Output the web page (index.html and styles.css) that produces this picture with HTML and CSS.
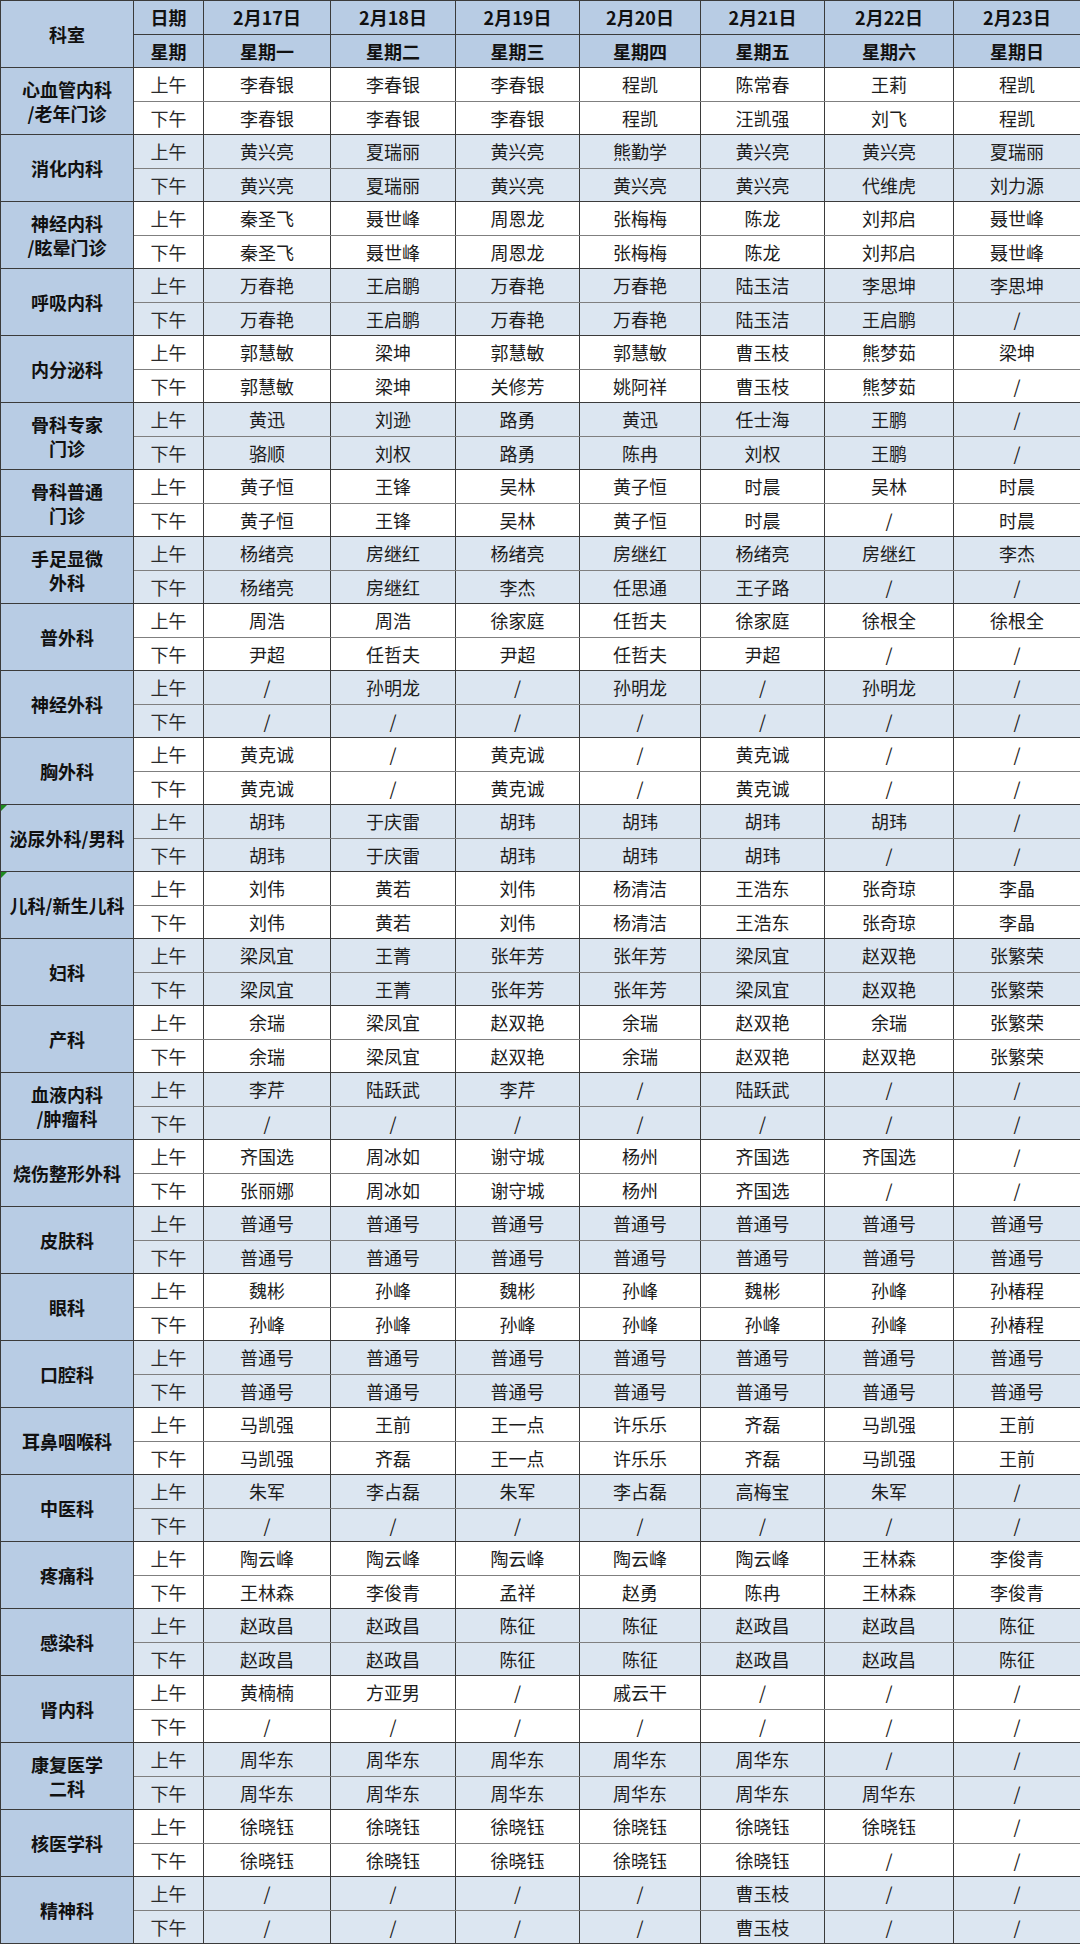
FILE: index.html
```html
<!DOCTYPE html>
<html lang="zh-CN">
<head>
<meta charset="utf-8">
<title>门诊排班表</title>
<link rel="stylesheet" href="styles.css">
</head>
<body>
<table class="sched">
<colgroup>
<col class="c-dept"><col class="c-slot"><col class="c-d1"><col class="c-d2"><col class="c-d3"><col class="c-d4"><col class="c-d5"><col class="c-d6"><col class="c-d7">
</colgroup>
<thead>
<tr><th class="dept" rowspan="2">科室</th><th>日期</th><th>2月17日</th><th>2月18日</th><th>2月19日</th><th>2月20日</th><th>2月21日</th><th>2月22日</th><th>2月23日</th></tr>
<tr><th>星期</th><th>星期一</th><th>星期二</th><th>星期三</th><th>星期四</th><th>星期五</th><th>星期六</th><th>星期日</th></tr>
</thead>
<tbody class="w">
<tr class="am"><th class="dept" rowspan="2">心血管内科<br>/老年门诊</th><td class="slot">上午</td><td>李春银</td><td>李春银</td><td>李春银</td><td>程凯</td><td>陈常春</td><td>王莉</td><td>程凯</td></tr>
<tr class="pm"><td class="slot">下午</td><td>李春银</td><td>李春银</td><td>李春银</td><td>程凯</td><td>汪凯强</td><td>刘飞</td><td>程凯</td></tr>
</tbody>
<tbody class="b">
<tr class="am"><th class="dept" rowspan="2">消化内科</th><td class="slot">上午</td><td>黄兴亮</td><td>夏瑞丽</td><td>黄兴亮</td><td>熊勤学</td><td>黄兴亮</td><td>黄兴亮</td><td>夏瑞丽</td></tr>
<tr class="pm"><td class="slot">下午</td><td>黄兴亮</td><td>夏瑞丽</td><td>黄兴亮</td><td>黄兴亮</td><td>黄兴亮</td><td>代维虎</td><td>刘力源</td></tr>
</tbody>
<tbody class="w">
<tr class="am"><th class="dept" rowspan="2">神经内科<br>/眩晕门诊</th><td class="slot">上午</td><td>秦圣飞</td><td>聂世峰</td><td>周恩龙</td><td>张梅梅</td><td>陈龙</td><td>刘邦启</td><td>聂世峰</td></tr>
<tr class="pm"><td class="slot">下午</td><td>秦圣飞</td><td>聂世峰</td><td>周恩龙</td><td>张梅梅</td><td>陈龙</td><td>刘邦启</td><td>聂世峰</td></tr>
</tbody>
<tbody class="b">
<tr class="am"><th class="dept" rowspan="2">呼吸内科</th><td class="slot">上午</td><td>万春艳</td><td>王启鹏</td><td>万春艳</td><td>万春艳</td><td>陆玉洁</td><td>李思坤</td><td>李思坤</td></tr>
<tr class="pm"><td class="slot">下午</td><td>万春艳</td><td>王启鹏</td><td>万春艳</td><td>万春艳</td><td>陆玉洁</td><td>王启鹏</td><td>/</td></tr>
</tbody>
<tbody class="w">
<tr class="am"><th class="dept" rowspan="2">内分泌科</th><td class="slot">上午</td><td>郭慧敏</td><td>梁坤</td><td>郭慧敏</td><td>郭慧敏</td><td>曹玉枝</td><td>熊梦茹</td><td>梁坤</td></tr>
<tr class="pm"><td class="slot">下午</td><td>郭慧敏</td><td>梁坤</td><td>关修芳</td><td>姚阿祥</td><td>曹玉枝</td><td>熊梦茹</td><td>/</td></tr>
</tbody>
<tbody class="b">
<tr class="am"><th class="dept" rowspan="2">骨科专家<br>门诊</th><td class="slot">上午</td><td>黄迅</td><td>刘逊</td><td>路勇</td><td>黄迅</td><td>任士海</td><td>王鹏</td><td>/</td></tr>
<tr class="pm"><td class="slot">下午</td><td>骆顺</td><td>刘权</td><td>路勇</td><td>陈冉</td><td>刘权</td><td>王鹏</td><td>/</td></tr>
</tbody>
<tbody class="w">
<tr class="am"><th class="dept" rowspan="2">骨科普通<br>门诊</th><td class="slot">上午</td><td>黄子恒</td><td>王锋</td><td>吴林</td><td>黄子恒</td><td>时晨</td><td>吴林</td><td>时晨</td></tr>
<tr class="pm"><td class="slot">下午</td><td>黄子恒</td><td>王锋</td><td>吴林</td><td>黄子恒</td><td>时晨</td><td>/</td><td>时晨</td></tr>
</tbody>
<tbody class="b">
<tr class="am"><th class="dept" rowspan="2">手足显微<br>外科</th><td class="slot">上午</td><td>杨绪亮</td><td>房继红</td><td>杨绪亮</td><td>房继红</td><td>杨绪亮</td><td>房继红</td><td>李杰</td></tr>
<tr class="pm"><td class="slot">下午</td><td>杨绪亮</td><td>房继红</td><td>李杰</td><td>任思通</td><td>王子路</td><td>/</td><td>/</td></tr>
</tbody>
<tbody class="w">
<tr class="am"><th class="dept" rowspan="2">普外科</th><td class="slot">上午</td><td>周浩</td><td>周浩</td><td>徐家庭</td><td>任哲夫</td><td>徐家庭</td><td>徐根全</td><td>徐根全</td></tr>
<tr class="pm"><td class="slot">下午</td><td>尹超</td><td>任哲夫</td><td>尹超</td><td>任哲夫</td><td>尹超</td><td>/</td><td>/</td></tr>
</tbody>
<tbody class="b">
<tr class="am"><th class="dept" rowspan="2">神经外科</th><td class="slot">上午</td><td>/</td><td>孙明龙</td><td>/</td><td>孙明龙</td><td>/</td><td>孙明龙</td><td>/</td></tr>
<tr class="pm"><td class="slot">下午</td><td>/</td><td>/</td><td>/</td><td>/</td><td>/</td><td>/</td><td>/</td></tr>
</tbody>
<tbody class="w">
<tr class="am"><th class="dept" rowspan="2">胸外科</th><td class="slot">上午</td><td>黄克诚</td><td>/</td><td>黄克诚</td><td>/</td><td>黄克诚</td><td>/</td><td>/</td></tr>
<tr class="pm"><td class="slot">下午</td><td>黄克诚</td><td>/</td><td>黄克诚</td><td>/</td><td>黄克诚</td><td>/</td><td>/</td></tr>
</tbody>
<tbody class="b">
<tr class="am"><th class="dept mark" rowspan="2">泌尿外科/男科</th><td class="slot">上午</td><td>胡玮</td><td>于庆雷</td><td>胡玮</td><td>胡玮</td><td>胡玮</td><td>胡玮</td><td>/</td></tr>
<tr class="pm"><td class="slot">下午</td><td>胡玮</td><td>于庆雷</td><td>胡玮</td><td>胡玮</td><td>胡玮</td><td>/</td><td>/</td></tr>
</tbody>
<tbody class="w">
<tr class="am"><th class="dept mark" rowspan="2">儿科/新生儿科</th><td class="slot">上午</td><td>刘伟</td><td>黄若</td><td>刘伟</td><td>杨清洁</td><td>王浩东</td><td>张奇琼</td><td>李晶</td></tr>
<tr class="pm"><td class="slot">下午</td><td>刘伟</td><td>黄若</td><td>刘伟</td><td>杨清洁</td><td>王浩东</td><td>张奇琼</td><td>李晶</td></tr>
</tbody>
<tbody class="b">
<tr class="am"><th class="dept" rowspan="2">妇科</th><td class="slot">上午</td><td>梁凤宜</td><td>王菁</td><td>张年芳</td><td>张年芳</td><td>梁凤宜</td><td>赵双艳</td><td>张繁荣</td></tr>
<tr class="pm"><td class="slot">下午</td><td>梁凤宜</td><td>王菁</td><td>张年芳</td><td>张年芳</td><td>梁凤宜</td><td>赵双艳</td><td>张繁荣</td></tr>
</tbody>
<tbody class="w">
<tr class="am"><th class="dept" rowspan="2">产科</th><td class="slot">上午</td><td>余瑞</td><td>梁凤宜</td><td>赵双艳</td><td>余瑞</td><td>赵双艳</td><td>余瑞</td><td>张繁荣</td></tr>
<tr class="pm"><td class="slot">下午</td><td>余瑞</td><td>梁凤宜</td><td>赵双艳</td><td>余瑞</td><td>赵双艳</td><td>赵双艳</td><td>张繁荣</td></tr>
</tbody>
<tbody class="b">
<tr class="am"><th class="dept" rowspan="2">血液内科<br>/肿瘤科</th><td class="slot">上午</td><td>李芹</td><td>陆跃武</td><td>李芹</td><td>/</td><td>陆跃武</td><td>/</td><td>/</td></tr>
<tr class="pm"><td class="slot">下午</td><td>/</td><td>/</td><td>/</td><td>/</td><td>/</td><td>/</td><td>/</td></tr>
</tbody>
<tbody class="w">
<tr class="am"><th class="dept" rowspan="2">烧伤整形外科</th><td class="slot">上午</td><td>齐国选</td><td>周冰如</td><td>谢守城</td><td>杨州</td><td>齐国选</td><td>齐国选</td><td>/</td></tr>
<tr class="pm"><td class="slot">下午</td><td>张丽娜</td><td>周冰如</td><td>谢守城</td><td>杨州</td><td>齐国选</td><td>/</td><td>/</td></tr>
</tbody>
<tbody class="b">
<tr class="am"><th class="dept" rowspan="2">皮肤科</th><td class="slot">上午</td><td>普通号</td><td>普通号</td><td>普通号</td><td>普通号</td><td>普通号</td><td>普通号</td><td>普通号</td></tr>
<tr class="pm"><td class="slot">下午</td><td>普通号</td><td>普通号</td><td>普通号</td><td>普通号</td><td>普通号</td><td>普通号</td><td>普通号</td></tr>
</tbody>
<tbody class="w">
<tr class="am"><th class="dept" rowspan="2">眼科</th><td class="slot">上午</td><td>魏彬</td><td>孙峰</td><td>魏彬</td><td>孙峰</td><td>魏彬</td><td>孙峰</td><td>孙椿程</td></tr>
<tr class="pm"><td class="slot">下午</td><td>孙峰</td><td>孙峰</td><td>孙峰</td><td>孙峰</td><td>孙峰</td><td>孙峰</td><td>孙椿程</td></tr>
</tbody>
<tbody class="b">
<tr class="am"><th class="dept" rowspan="2">口腔科</th><td class="slot">上午</td><td>普通号</td><td>普通号</td><td>普通号</td><td>普通号</td><td>普通号</td><td>普通号</td><td>普通号</td></tr>
<tr class="pm"><td class="slot">下午</td><td>普通号</td><td>普通号</td><td>普通号</td><td>普通号</td><td>普通号</td><td>普通号</td><td>普通号</td></tr>
</tbody>
<tbody class="w">
<tr class="am"><th class="dept" rowspan="2">耳鼻咽喉科</th><td class="slot">上午</td><td>马凯强</td><td>王前</td><td>王一点</td><td>许乐乐</td><td>齐磊</td><td>马凯强</td><td>王前</td></tr>
<tr class="pm"><td class="slot">下午</td><td>马凯强</td><td>齐磊</td><td>王一点</td><td>许乐乐</td><td>齐磊</td><td>马凯强</td><td>王前</td></tr>
</tbody>
<tbody class="b">
<tr class="am"><th class="dept" rowspan="2">中医科</th><td class="slot">上午</td><td>朱军</td><td>李占磊</td><td>朱军</td><td>李占磊</td><td>高梅宝</td><td>朱军</td><td>/</td></tr>
<tr class="pm"><td class="slot">下午</td><td>/</td><td>/</td><td>/</td><td>/</td><td>/</td><td>/</td><td>/</td></tr>
</tbody>
<tbody class="w">
<tr class="am"><th class="dept" rowspan="2">疼痛科</th><td class="slot">上午</td><td>陶云峰</td><td>陶云峰</td><td>陶云峰</td><td>陶云峰</td><td>陶云峰</td><td>王林森</td><td>李俊青</td></tr>
<tr class="pm"><td class="slot">下午</td><td>王林森</td><td>李俊青</td><td>孟祥</td><td>赵勇</td><td>陈冉</td><td>王林森</td><td>李俊青</td></tr>
</tbody>
<tbody class="b">
<tr class="am"><th class="dept" rowspan="2">感染科</th><td class="slot">上午</td><td>赵政昌</td><td>赵政昌</td><td>陈征</td><td>陈征</td><td>赵政昌</td><td>赵政昌</td><td>陈征</td></tr>
<tr class="pm"><td class="slot">下午</td><td>赵政昌</td><td>赵政昌</td><td>陈征</td><td>陈征</td><td>赵政昌</td><td>赵政昌</td><td>陈征</td></tr>
</tbody>
<tbody class="w">
<tr class="am"><th class="dept" rowspan="2">肾内科</th><td class="slot">上午</td><td>黄楠楠</td><td>方亚男</td><td>/</td><td>戚云干</td><td>/</td><td>/</td><td>/</td></tr>
<tr class="pm"><td class="slot">下午</td><td>/</td><td>/</td><td>/</td><td>/</td><td>/</td><td>/</td><td>/</td></tr>
</tbody>
<tbody class="b">
<tr class="am"><th class="dept" rowspan="2">康复医学<br>二科</th><td class="slot">上午</td><td>周华东</td><td>周华东</td><td>周华东</td><td>周华东</td><td>周华东</td><td>/</td><td>/</td></tr>
<tr class="pm"><td class="slot">下午</td><td>周华东</td><td>周华东</td><td>周华东</td><td>周华东</td><td>周华东</td><td>周华东</td><td>/</td></tr>
</tbody>
<tbody class="w">
<tr class="am"><th class="dept" rowspan="2">核医学科</th><td class="slot">上午</td><td>徐晓钰</td><td>徐晓钰</td><td>徐晓钰</td><td>徐晓钰</td><td>徐晓钰</td><td>徐晓钰</td><td>/</td></tr>
<tr class="pm"><td class="slot">下午</td><td>徐晓钰</td><td>徐晓钰</td><td>徐晓钰</td><td>徐晓钰</td><td>徐晓钰</td><td>/</td><td>/</td></tr>
</tbody>
<tbody class="b">
<tr class="am"><th class="dept" rowspan="2">精神科</th><td class="slot">上午</td><td>/</td><td>/</td><td>/</td><td>/</td><td>曹玉枝</td><td>/</td><td>/</td></tr>
<tr class="pm"><td class="slot">下午</td><td>/</td><td>/</td><td>/</td><td>/</td><td>曹玉枝</td><td>/</td><td>/</td></tr>
</tbody>
</table>
</body>
</html>
```

FILE: styles.css
```css
html, body {
  margin: 0;
  padding: 0;
  background: #ffffff;
}

.sched {
  width: 1080px;
  table-layout: fixed;
  border-collapse: collapse;
  font-family: "Noto Sans CJK SC", "Microsoft YaHei", sans-serif;
  font-size: 18px;
  color: #1c1c1c;
}

.c-dept { width: 133px; }
.c-slot { width: 70px; }
.c-d1 { width: 127px; }
.c-d2 { width: 125px; }
.c-d3 { width: 124px; }
.c-d4 { width: 121px; }
.c-d5 { width: 124px; }
.c-d6 { width: 129px; }
.c-d7 { width: 127px; }

.sched tr {
  height: 33.5px;
}

.sched th,
.sched td {
  border: 1px solid #3b3b3b;
  padding: 0;
  text-align: center;
  vertical-align: middle;
  line-height: 22px;
  white-space: nowrap;
}

.sched thead th {
  background: #b8cce4;
  font-weight: bold;
  color: #111;
}

.sched th.dept {
  background: #b8cce4;
  font-weight: bold;
  color: #111;
  line-height: 24px;
  position: relative;
}

.sched tbody.w td { background: #ffffff; }
.sched tbody.b td { background: #dce6f1; }

.sched tr.am td { border-bottom-color: #7f7f7f; }
.sched tr.pm td { border-top-color: #7f7f7f; }

.sched td.slot {
  color: #2b2b2b;
}

.sched th.mark::before {
  content: "";
  position: absolute;
  left: 0;
  top: 0;
  width: 0;
  height: 0;
  border-top: 6px solid #1e8a1e;
  border-right: 6px solid transparent;
}
```
